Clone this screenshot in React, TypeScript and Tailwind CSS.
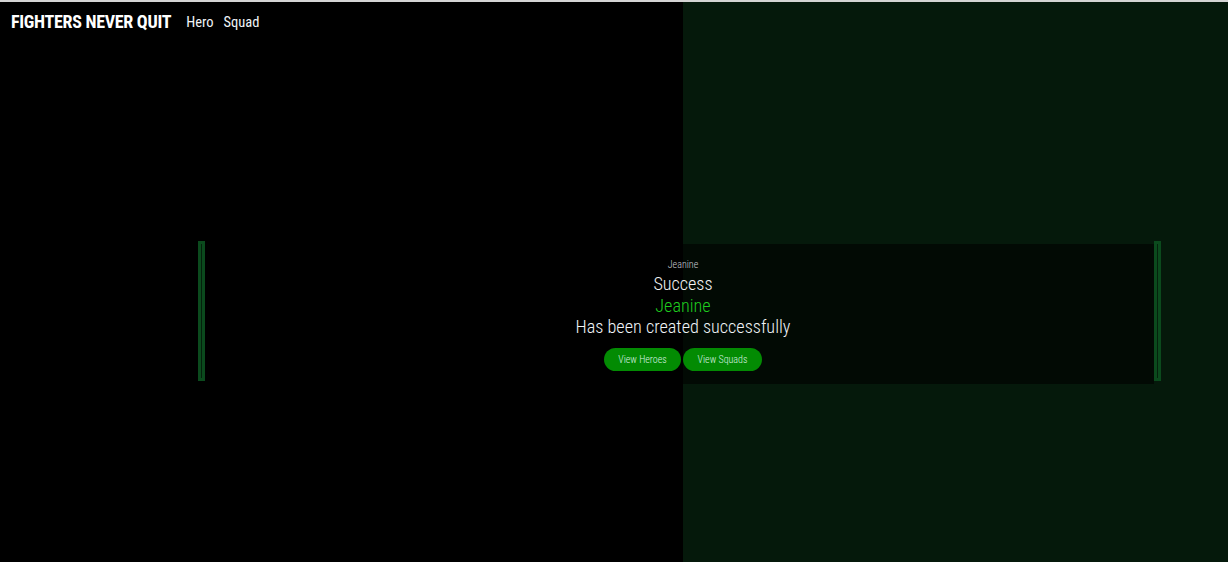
import React from "react";

const font = { fontFamily: '"Roboto Condensed", "DejaVu Sans Condensed", "DejaVu Sans", sans-serif', fontStretch: "condensed" as const };

function Bar() {
  return (
    <div className="w-[7px] h-[140px] bg-[#0b4a1d] px-[3px] py-[3px]">
      <div className="w-[1px] h-full bg-[#04200c]" />
    </div>
  );
}

export default function App() {
  return (
    <div className="relative w-[1228px] h-[562px] overflow-hidden bg-black text-white" style={font}>
      <div className="absolute inset-0 flex">
        <div className="w-[683px] h-full bg-black" />
        <div className="flex-1 h-full bg-[#05190b]" />
      </div>
      <div className="relative flex flex-col h-full">
        <div className="h-[2px] bg-[#d4d4d4]" />
        <nav className="flex items-end pl-[11px] pt-[9px] h-[30px]">
          <span className="text-[18px] leading-[20px] font-bold tracking-[-0.3px] text-white">FIGHTERS NEVER QUIT</span>
          <span className="ml-[15px] text-[14.5px] leading-[18px] text-[#f0f4f8]">Hero</span>
          <span className="ml-[10px] text-[14.5px] leading-[18px] text-[#f0f4f8]">Squad</span>
        </nav>
        <div className="flex items-start pl-[198px] mt-[209px]">
          <Bar />
          <div className="relative w-[949px] h-[140px] mt-[3px] bg-black/60">
            <div className="absolute left-[478px] top-0 -translate-x-1/2 flex flex-col items-center w-[400px] font-light">
              <div className="mt-[15px] text-[10px] leading-[12px] text-[#c9ccd4]">Jeanine</div>
              <div className="mt-[2px] text-[18.2px] leading-[21.5px] text-[#f4f4f4]">Success</div>
              <div className="text-[18.2px] leading-[21.5px] text-[#1fcc1f]">Jeanine</div>
              <div className="text-[18.2px] leading-[21.5px] text-[#f0f4f8]">Has been created successfully</div>
              <div className="mt-[10px] flex gap-[2px]">
                <button className="w-[77px] h-[23px] rounded-full bg-[#038b03] text-[10px] text-[#d8f0e0]">View Heroes</button>
                <button className="w-[79px] h-[23px] rounded-full bg-[#038b03] text-[10px] text-[#d8f0e0]">View Squads</button>
              </div>
            </div>
          </div>
          <Bar />
        </div>
      </div>
    </div>
  );
}
